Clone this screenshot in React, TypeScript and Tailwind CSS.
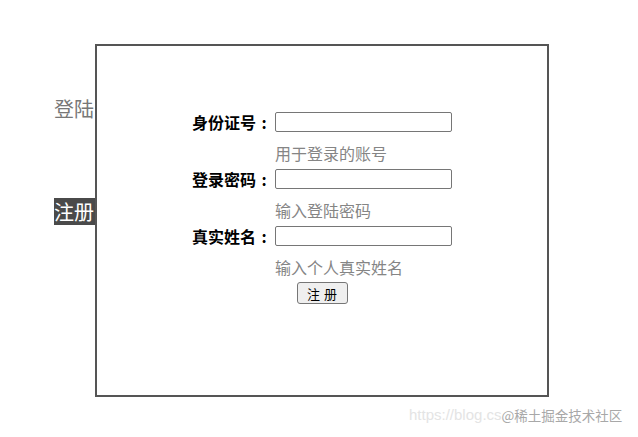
import React from "react"

const FONT = { fontFamily: '"Microsoft YaHei", "Noto Sans CJK SC", "Noto Sans", sans-serif' }

const fields = [
  { label: "身份证号", hint: "用于登录的账号", type: "text" },
  { label: "登录密码", hint: "输入登陆密码", type: "password" },
  { label: "真实姓名", hint: "输入个人真实姓名", type: "text" },
]

export default function App() {
  return (
    <div className="relative w-[638px] h-[437px] bg-white overflow-hidden" style={FONT}>
      <div className="flex pl-[54px] pt-[44px]">
        {/* side nav */}
        <div className="w-[41px] flex flex-col text-[20px] leading-[27px]">
          <div className="mt-[51px] text-[#777]">登陆</div>
          <div className="mt-[76px] bg-[#4a4a4a] text-white">注册</div>
        </div>

        {/* form box */}
        <div className="w-[454px] h-[353px] border-2 border-[#555] flex flex-col items-center pt-[66px]">
          {fields.map(f => (
            <div key={f.label} className="flex flex-col">
              <div className="flex items-center h-5">
                <span className="w-[80px] flex justify-end text-[16px] font-bold text-black leading-5">
                  {f.label}
                  <span className="w-4 text-center">:</span>
                </span>
                <input
                  type={f.type}
                  className="ml-[3px] w-[177px] h-5 border border-[#767676] rounded-[2px] bg-white outline-none"
                />
              </div>
              <div className="ml-[83px] mt-[11px] mb-[6px] text-[16px] leading-5 text-[#858585]">{f.hint}</div>
            </div>
          ))}
          <button className="-mt-[1px] w-[51px] h-[22px] border border-[#767676] rounded-[3px] bg-[#efefef] text-[13px] text-black leading-none tracking-[4px] pl-[4px]">
            注册
          </button>
        </div>
      </div>

      {/* watermark */}
      <div className="absolute left-[409px] top-[405px] flex items-center leading-5">
        <span className="text-[#e4e4e4] text-[15px]" style={{ fontFamily: '"Liberation Sans", sans-serif' }}>https://blog.cs</span>
        <span className="text-[#a8a8a8] text-[13.5px]">@稀土掘金技术社区</span>
      </div>
    </div>
  )
}
